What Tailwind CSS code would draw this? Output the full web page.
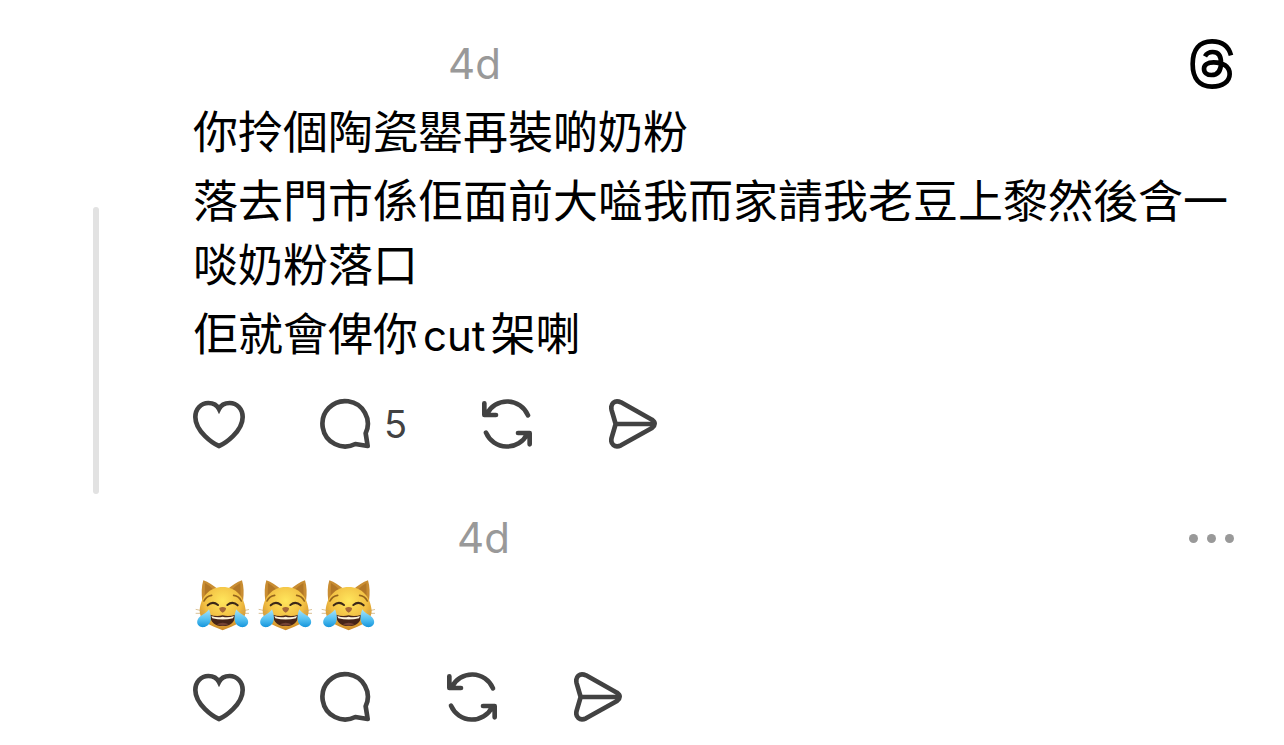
<!DOCTYPE html>
<html lang="zh-HK">
<head>
  <meta charset="UTF-8" />
  <meta name="viewport" content="width=device-width, initial-scale=1.0" />
  <title>Threads</title>
  <script src="https://cdn.jsdelivr.net/npm/@tailwindcss/browser@4"></script>
</head>
<body class="bg-white text-black font-[Inter,'Noto_Sans_CJK_TC',sans-serif]">
  <!-- shared icons; kept rendered at zero size so the gradients still resolve -->
  <svg class="absolute size-0" aria-hidden="true">
    <symbol id="heart" viewBox="39 39 156 156">
      <path d="M117 183C100 176 46 140 46 96C46 72 63 54 85 54C99 54 111 60 117 72C123 60 135 54 149 54C171 54 188 72 188 96C188 140 134 176 117 183Z" fill="none" stroke="currentColor" stroke-width="14" />
    </symbol>
    <symbol id="comment" viewBox="420 39 156 156">
      <path d="M526 177A68 68 0 1 1 557 145L563 183Z" fill="none" stroke="currentColor" stroke-width="14" stroke-linejoin="round" />
    </symbol>
    <symbol id="repost" viewBox="66 39 156 156">
      <path d="M204 91A68 68 0 0 0 80 88M73 55V90H108M78 143A68 68 0 0 0 202 146M209 178V144H174" fill="none" stroke="currentColor" stroke-width="14" stroke-linecap="round" stroke-linejoin="round" />
    </symbol>
    <symbol id="send" viewBox="447 39 156 156">
      <path d="M455 76C450 56 464 43 483 52L576 104Q592 116 576 129L483 181C464 190 450 177 455 158L467 117ZM467 117H584" fill="none" stroke="currentColor" stroke-width="14" stroke-linejoin="round" />
    </symbol>
    <symbol id="joy-cat" viewBox="15 12 162 162">
      <path d="M40 16Q62 24 86 45L37 80Q32 42 40 16ZM156 16Q134 24 110 45L159 80Q164 42 156 16Z" fill="#c98d32" />
      <path d="M45 24Q58 31 72 46L44 66ZM151 24Q138 31 124 46L152 66Z" fill="#b27726" />
      <path d="M98 36C138 36 164 66 167 106C168 132 145 148 124 155L98 166L72 155C51 148 28 132 29 106C32 66 58 36 98 36Z" fill="url(#fur)" />
      <path d="M17 103L44 109M17 115L42 115M179 103L152 109M179 115L154 115" stroke="#c9a361" stroke-width="2" />
      <path d="M42 78Q49 63 65 61M154 78Q147 63 131 61" fill="none" stroke="#95651c" stroke-width="5" stroke-linecap="round" />
      <path d="M53 91Q68 77 84 90M112 90Q128 77 143 91" fill="none" stroke="#3b2818" stroke-width="6" stroke-linecap="round" />
      <path d="M88 99Q98 93 108 99Q108 109 98 113Q88 109 88 99Z" fill="#a76838" />
      <path d="M60 119Q79 126 98 121Q117 126 136 119Q134 153 98 153Q62 153 60 119Z" fill="#462418" />
      <path d="M64 123Q82 129 98 125Q114 129 132 123L129 130Q98 137 67 130Z" fill="#fff4dc" />
      <path d="M80 148Q98 138 116 148Q98 156 80 148Z" fill="#754335" />
      <path d="M57 103C65 122 67 150 44 156C25 159 17 145 24 132C31 120 49 116 57 103ZM139 103C131 122 129 150 152 156C171 159 179 145 172 132C165 120 147 116 139 103Z" fill="url(#tear)" />
    </symbol>
    <defs>
      <radialGradient id="fur" cx="50%" cy="32%" r="67%">
        <stop offset="0" stop-color="#ffe65c" />
        <stop offset=".6" stop-color="#f2bf43" />
        <stop offset="1" stop-color="#ce8a28" />
      </radialGradient>
      <linearGradient id="tear" x1="0" y1="0" x2="0" y2="1">
        <stop offset="0" stop-color="#a8e2fa" />
        <stop offset=".55" stop-color="#55c1f1" />
        <stop offset="1" stop-color="#1695dc" />
      </linearGradient>
    </defs>
  </svg>

  <main>
    <article class="flex pr-[50px]">
      <div class="w-[193px] shrink-0 flex pl-[93px] pt-[207px]">
        <div class="w-[6px] rounded-full bg-[#e2e2e2]"></div>
      </div>
      <div class="grow min-w-0 pt-[39px] pb-11">
        <header class="flex items-center justify-between h-[50px] pl-[255px]">
          <time class="text-[42px] leading-[50px] text-[#999999]">4d</time>
          <a href="#" aria-label="Threads">
            <svg class="w-11 h-[50px]" viewBox="60 42 132 150" fill="none" stroke="currentColor" stroke-width="14">
              <path d="M183 91C176 64 156 49 126 49C88 49 68 74 68 117C68 160 88 185 126 185C158 185 179 170 179 147C179 124 158 112 131 112C112 112 102 120 102 131C102 143 112 150 124 150C144 150 153 137 153 113C153 92 146 81 128 81C117 81 110 85 105 94" />
            </svg>
          </a>
        </header>
        <div class="mt-3 flex flex-col gap-[5px] text-[45px] leading-[64px]">
          <p>你拎個陶瓷罌再裝啲奶粉</p>
          <p>落去門市係佢面前大嗌我而家請我老豆上黎然後含一啖奶粉落口</p>
          <p>佢就會俾你<span class="mx-[5px] text-[42px] leading-none">cut</span>架喇</p>
        </div>
        <div class="mt-[31px] flex items-center gap-[75px] text-[#424242]">
          <button type="button" aria-label="Like"><svg class="size-[52px]"><use href="#heart" /></svg></button>
          <button type="button" aria-label="Reply" class="flex items-center gap-3">
            <svg class="size-[52px]"><use href="#comment" /></svg>
            <span class="text-[38px] leading-[52px]">5</span>
          </button>
          <button type="button" aria-label="Repost"><svg class="size-[52px]"><use href="#repost" /></svg></button>
          <button type="button" aria-label="Share"><svg class="size-[52px]"><use href="#send" /></svg></button>
        </div>
      </div>
    </article>

    <article class="flex pr-[50px]">
      <div class="w-[193px] shrink-0"></div>
      <div class="grow min-w-0 pt-[19px]">
        <header class="flex items-center justify-between h-[50px] pl-[264px]">
          <time class="text-[42px] leading-[50px] text-[#999999]">4d</time>
          <button type="button" aria-label="More" class="flex gap-[9px]">
            <span class="size-[9px] rounded-full bg-[#999999]"></span>
            <span class="size-[9px] rounded-full bg-[#999999]"></span>
            <span class="size-[9px] rounded-full bg-[#999999]"></span>
          </button>
        </header>
        <div class="mt-4 pl-[2px] flex gap-[9px]">
          <svg class="size-[54px]" role="img" aria-label="😹"><use href="#joy-cat" /></svg>
          <svg class="size-[54px]" role="img" aria-label="😹"><use href="#joy-cat" /></svg>
          <svg class="size-[54px]" role="img" aria-label="😹"><use href="#joy-cat" /></svg>
        </div>
        <div class="mt-[38px] flex items-center gap-[75px] text-[#424242]">
          <button type="button" aria-label="Like"><svg class="size-[52px]"><use href="#heart" /></svg></button>
          <button type="button" aria-label="Reply"><svg class="size-[52px]"><use href="#comment" /></svg></button>
          <button type="button" aria-label="Repost"><svg class="size-[52px]"><use href="#repost" /></svg></button>
          <button type="button" aria-label="Share"><svg class="size-[52px]"><use href="#send" /></svg></button>
        </div>
      </div>
    </article>
  </main>
</body>
</html>
